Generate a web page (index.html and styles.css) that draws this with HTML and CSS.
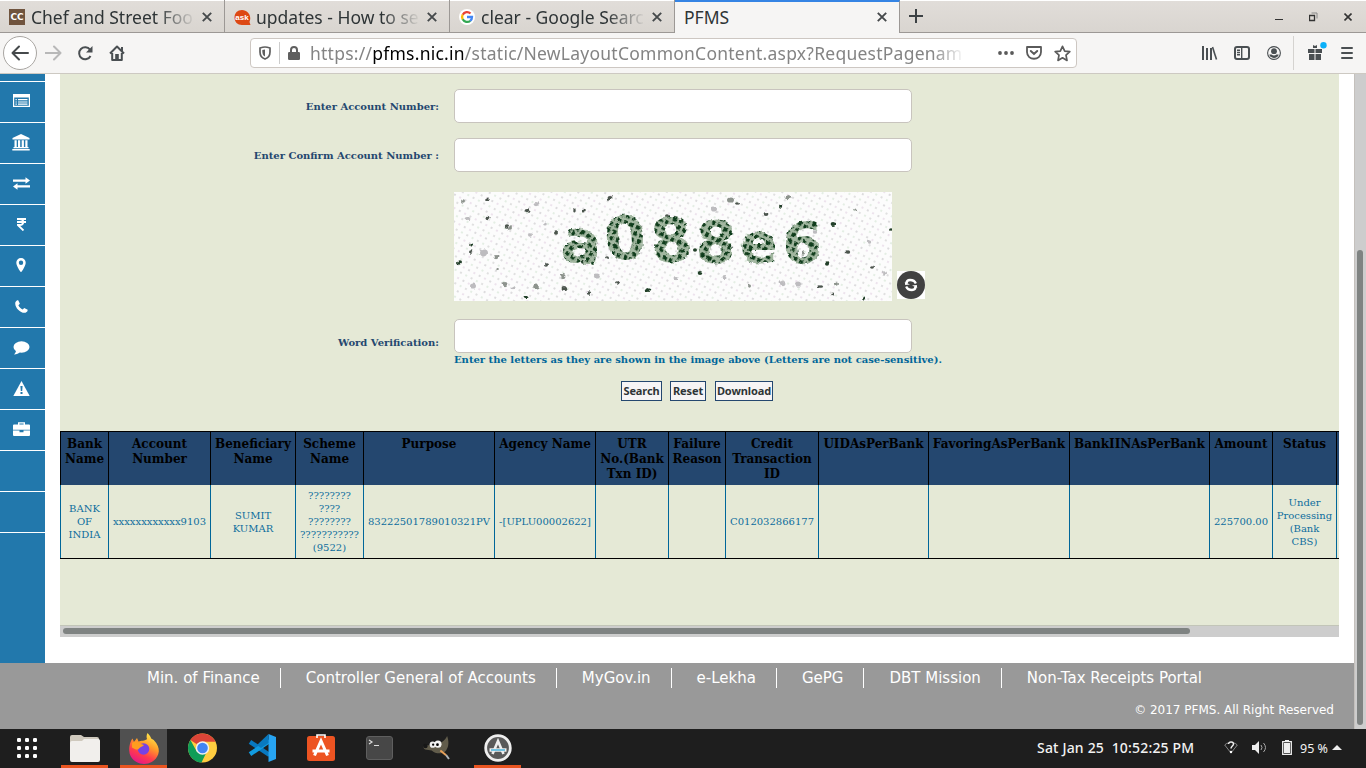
FILE: index.html
```html
<!DOCTYPE html>
<html lang="en">
<head>
<meta charset="utf-8">
<title>PFMS</title>
<link rel="stylesheet" href="styles.css">
</head>
<body>
<div class="screen">
  <header class="tabs">
    <div class="tab">
      <svg class="fav" width="16" height="16" viewBox="0 0 16 16"><rect width="16" height="16" fill="#70543e"/><text x="8" y="11" text-anchor="middle" class="cc">CC</text></svg>
      <span class="tab-title">Chef and Street Foo</span>
      <svg class="x" width="10" height="10" viewBox="0 0 10 10"><path d="M.8.8l8.4 8.4M9.2.8L.8 9.2"/></svg>
    </div>
    <div class="tab">
      <svg class="fav" width="17" height="17" viewBox="0 0 17 17"><path fill="#dd4814" d="M8 1C3.500 1 .5 4 .5 8.500S3.500 16 8 16h8.500l-1-3C18 7 14 1 8 1z"/><text x="8" y="11" text-anchor="middle" class="ask">ask</text></svg>
      <span class="tab-title second">updates - How to se</span>
      <svg class="x" width="10" height="10" viewBox="0 0 10 10"><path d="M.8.8l8.4 8.4M9.2.8L.8 9.2"/></svg>
    </div>
    <div class="tab">
      <svg class="fav" width="16" height="16" viewBox="0 0 16 16"><circle cx="8" cy="8" r="8" fill="#fff"/><g fill="none" stroke-width="2.300"><path stroke="#ea4335" d="M3.700 5.700A5 5 0 0 1 11.500 4.500"/><path stroke="#fbbc05" d="M3.700 5.600a5 5 0 0 0 0 4.800"/><path stroke="#34a853" d="M3.700 10.300a5 5 0 0 0 7.600 1.500"/><path stroke="#4285f4" d="M8 8h5a5 5 0 0 1-1.800 3.900"/></g></svg>
      <span class="tab-title">clear - Google Searc</span>
      <svg class="x" width="10" height="10" viewBox="0 0 10 10"><path d="M.8.8l8.4 8.4M9.2.8L.8 9.2"/></svg>
    </div>
    <div class="tab active">
      <span class="tab-title">PFMS</span>
      <svg class="x" width="10" height="10" viewBox="0 0 10 10"><path d="M.8.8l8.4 8.4M9.2.8L.8 9.2"/></svg>
    </div>
    <svg class="plus" width="14" height="14" viewBox="0 0 14 14"><path d="M7 0v14M0 7h14"/></svg>
    <div class="winctl">
      <svg width="8" height="10" viewBox="0 0 8 10"><path d="M0 7.500h8" stroke="#333" fill="none"/></svg>
      <svg width="9" height="10" viewBox="0 0 9 10"><g fill="none" stroke="#333"><path d="M.5 3.500h5v5h-5z" stroke-width="1.300"/><path d="M2.500 1h5.500v5.500" stroke="#888"/></g></svg>
      <svg width="8" height="8" viewBox="0 0 8 8"><path d="M.5.5l7 7M7.500.5l-7 7" stroke="#333" stroke-width="1.600"/></svg>
    </div>
  </header>

  <div class="toolbar">
    <div class="back"><svg width="18" height="16" viewBox="0 0 18 16"><path d="M17 8H2M8 1.500L1.500 8 8 14.500"/></svg></div>
    <svg class="fwd" width="17" height="16" viewBox="0 0 17 16"><path d="M0 8h15M9 1.500L15.500 8 9 14.500"/></svg>
    <svg class="reload" width="16" height="16" viewBox="0 0 16 16"><path fill="none" stroke="#4a4f52" stroke-width="2" d="M13 4.700A6 6 0 1 0 13.500 11"/><path fill="#4a4f52" d="M15.500 1v6.500H9z"/></svg>
    <svg class="home" width="16" height="16" viewBox="0 0 16 16"><path fill="none" stroke="#4a4f52" stroke-width="2" stroke-linejoin="round" d="M1 8.500L8 1.500l7 7M3.200 8v7h9.600V8"/><path fill="#4a4f52" d="M6.200 9h3.600v6H6.200zM12 2h2v4h-2z"/></svg>
    <div class="urlbar">
      <svg width="12" height="14" viewBox="0 0 12 14"><path fill="none" stroke="#5f5f5f" stroke-width="1.700" d="M6 1c2 0 3.500.5 5 1v4c0 4-2 6-5 7-3-1-5-3-5-7V2c1.500-.5 3-1 5-1z"/><path fill="#5f5f5f" d="M6 3.500v7C4 9.500 3.300 8 3.300 4z"/></svg>
      <i class="usep"></i>
      <svg class="lock" width="12" height="14" viewBox="0 0 12 14"><path fill="none" stroke="#5f5f5f" stroke-width="2" d="M3 7V4a3 3 0 0 1 6 0v3"/><rect y="6" width="12" height="8" rx="1.200" fill="#5f5f5f"/></svg>
      <span class="url">https://<b>pfms.nic.in</b>/static/NewLayoutCommonContent.aspx?RequestPagenam</span>
      <svg class="dots" width="16" height="4" viewBox="0 0 16 4"><g fill="#5a5a5a"><circle cx="2" cy="2" r="1.900"/><circle cx="8" cy="2" r="1.900"/><circle cx="14" cy="2" r="1.900"/></g></svg>
      <svg class="pocket" width="16" height="14" viewBox="0 0 16 14"><path fill="none" stroke="#5a5a5a" stroke-width="1.800" stroke-linejoin="round" d="M1 1h14v5c0 9-14 9-14 0z"/><path fill="none" stroke="#5a5a5a" stroke-width="2" stroke-linecap="round" d="M4.800 5L8 8l3.200-3"/></svg>
      <svg class="star" width="17" height="17" viewBox="0 0 17 17"><path fill="none" stroke="#5a5a5a" stroke-width="1.700" stroke-linejoin="round" d="M8.500 1.300l2.200 4.800 5.100.6-3.800 3.500 1 5.200-4.500-2.600L4 15.400l1-5.200-3.800-3.500 5.100-.6z"/></svg>
    </div>
    <div class="tools">
      <svg width="16" height="14" viewBox="0 0 16 14"><path fill="none" stroke="#4a4f52" stroke-width="2" d="M1 0v14M5 2v12M9 2v12"/><path stroke="#4a4f52" stroke-width="1.600" d="M10.500 1l4 12.500"/></svg>
      <svg width="16" height="14" viewBox="0 0 16 14"><rect x="1" y="1" width="14" height="12" rx="2" fill="none" stroke="#4a4f52" stroke-width="2"/><path stroke="#4a4f52" stroke-width="1.400" d="M7.700 1v12M3 4.200h3M3 6.500h3M3 8.800h3"/></svg>
      <svg class="account" width="14" height="14" viewBox="0 0 14 14"><circle cx="7" cy="7" r="6.400" fill="none" stroke="#4a4f52" stroke-width="1.100"/><circle cx="7" cy="5.200" r="2.900" fill="#4a4f52"/><path fill="#4a4f52" d="M2.300 8.500h2.200c1.500 1.300 3.500 1.300 5 0h2.200c-.8 4.500-8.600 4.500-9.400 0z"/></svg>
      <i class="tsep"></i>
      <svg class="gift" width="19" height="18" viewBox="0 0 19 18"><path fill="#4a4f52" d="M0 7h6.500v4H0zM7.500 7H14v4H7.500zM1 12h5.500v6H1zM7.500 12H13v6H7.500zM5 3l2 1 2-1v3H5z"/><circle cx="15.500" cy="3.200" r="3.200" fill="#0ab0f9"/></svg>
      <svg class="menu" width="12" height="12" viewBox="0 0 12 12"><path stroke="#4a4f52" stroke-width="2" stroke-linecap="round" d="M1 1h10M1 6h10M1 11h10"/></svg>
    </div>
  </div>

  <div class="viewport">
    <div class="page">
      <div class="body">
        <nav class="side">
          <a class="first"></a>
          <a><svg width="17" height="14" viewBox="0 0 17 14"><path fill="none" stroke="#fff" stroke-width="1.200" d="M.6 1.600h15.800v10.800H.6z"/><path fill="#fff" d="M0 0h17v3.500H0z"/><path stroke="#fff" stroke-width="1.200" d="M2.500 5.700h1.300M5 5.700h9.500M2.500 8h1.300M5 8h9.500M2.500 10.200h1.300M5 10.200h9.500"/></svg></a>
          <a><svg width="18" height="17" viewBox="0 0 18 17"><path fill="#fff" d="M9 0l8.500 4v1.500H.5V4zM2.500 6.300h2.200v6.700H2.500zM6 6.300h2.200V13H6zM9.700 6.300h2.200V13H9.700zM13.300 6.300h2.200V13h-2.200zM1.500 13h15v1.300h-15zM.3 15h17.400v1.600H.3z"/></svg></a>
          <a><svg width="17" height="13" viewBox="0 0 17 13"><path fill="#fff" d="M0 2.500h12.500V.3L17 3.600l-4.500 3.200V4.700H0zM17 8.300H4.500V6.200L0 9.400l4.500 3.300v-2.200H17z"/></svg></a>
          <a><svg width="9" height="13" viewBox="0 0 9 13"><path fill="none" stroke="#fff" stroke-width="1.800" d="M0 1h9M0 4h9M0 1h2.500c5 0 5 6 0 6H.8l5.700 5.500"/></svg></a>
          <a><svg width="10" height="14" viewBox="0 0 10 14"><path fill="#fff" fill-rule="evenodd" d="M5 0a4.700 4.700 0 0 1 4.700 5C9.700 7 7.500 11 5.700 13.600a.8.8 0 0 1-1.400 0C2.500 11 .3 7 .3 5A4.700 4.700 0 0 1 5 0zm0 2.500a2.200 2.200 0 1 0 0 4.400 2.200 2.200 0 0 0 0-4.400z"/></svg></a>
          <a><svg width="13" height="13" viewBox="0 0 13 13"><path fill="#fff" d="M.3 2.500C1 .8 2 .3 3.200.3l1.700 3.500-1.500 1.500c1 2 2.300 3.300 4.300 4.300l1.500-1.500 3.500 1.700c0 1.200-.5 2.200-2.200 2.900C5.500 13.500-.5 7.500.3 2.500z"/></svg></a>
          <a class="low"><svg width="17" height="14" viewBox="0 0 17 14"><ellipse cx="8.500" cy="6" rx="8" ry="5.800" fill="#fff"/><path fill="#fff" d="M3 9c0 2-.7 3.300-2 4.500 3 0 4.700-1 6-2.500z"/></svg></a>
          <a><svg width="17" height="15" viewBox="0 0 17 15"><path fill="#fff" d="M8.500 0l8.200 15H.3z"/><path fill="#2278ac" d="M7.400 5h2.200l-.4 5H7.800zM7.500 11h2v2h-2z"/></svg></a>
          <a><svg width="17" height="14" viewBox="0 0 17 14"><path fill="none" stroke="#fff" stroke-width="1.400" d="M5.700 3V.9h5.600V3"/><path fill="#fff" d="M1 2.600h15a1 1 0 0 1 1 1v4.200H0V3.600a1 1 0 0 1 1-1zM0 8.600h6.500v1.700h4V8.600H17V13a1 1 0 0 1-1 1H1a1 1 0 0 1-1-1z"/></svg></a>
          <a></a><a></a>
        </nav>
        <main class="panel">
          <div class="panel-body">
            <form class="form">
              <label>Enter Account Number:</label><div><input type="text"></div>
              <label>Enter Confirm Account Number :</label><div><input type="text"></div>
              <span></span>
              <div class="captcha">
                <svg width="438" height="109" viewBox="0 0 438 109">
                  <defs>
                    <pattern id="grain" width="12" height="12" patternUnits="userSpaceOnUse" patternTransform="rotate(28)"><rect width="12" height="12" fill="#fcfcfc"/><circle cx="2" cy="2" r=".8" fill="#b6b5b8"/><circle cx="8" cy="2" r=".8" fill="#dac5da"/><circle cx="2" cy="8" r=".8" fill="#c7dec7"/><circle cx="8" cy="8" r=".8" fill="#bcbcbc"/></pattern>
                    <pattern id="weave" width="6.600" height="6.600" patternUnits="userSpaceOnUse" patternTransform="rotate(28)"><rect width="6.600" height="6.600" fill="#a3b8a1"/><rect x="1" y="1" width="4" height="4" fill="#113d1c"/></pattern>
                    <filter id="soft" x="-5%" y="-10%" width="110%" height="120%"><feTurbulence type="fractalNoise" baseFrequency=".18" numOctaves="2" seed="4" result="n"/><feDisplacementMap in="SourceGraphic" in2="n" scale="4" xChannelSelector="R" yChannelSelector="G"/><feGaussianBlur stdDeviation=".7"/></filter>
                  </defs>
                  <rect width="438" height="109" fill="url(#grain)"/>
                  <g id="specks" filter="url(#soft)"></g>
                  <g class="word" filter="url(#soft)" fill="url(#weave)">
                    <text transform="translate(105 68) rotate(8)" font-size="60">a</text>
                    <text transform="translate(152 69) rotate(-5)" font-size="60">0</text>
                    <text transform="translate(198 71) rotate(-4)" font-size="60">8</text>
                    <text transform="translate(241 70) rotate(2)" font-size="58">8</text>
                    <text transform="translate(286 70)" font-size="55">e</text>
                    <text transform="translate(328 71) rotate(1)" font-size="57">6</text>
                  </g>
                </svg>
                <svg class="refresh" width="28" height="28" viewBox="0 0 28 28"><rect width="28" height="28" fill="#fff"/><circle cx="14" cy="14" r="14" fill="#414141"/><g fill="none" stroke="#fff" stroke-width="2.300"><path d="M9.500 12.500c0-2 1.300-3.500 3.500-3.500 2.800 0 5 1.200 5.800 3.500"/><path d="M18.500 15.500c0 2-1.300 3.500-3.500 3.500-2.800 0-5-1.200-5.800-3.500"/></g><path fill="#fff" d="M7.800 11l.4 3 4.800-.6zM20.200 17l-.4-3-4.800.6z"/></svg>
              </div>
              <label class="wv">Word Verification:</label>
              <div class="verify"><input type="text"><p class="hint">Enter the letters as they are shown in the image above (Letters are not case-sensitive).</p></div>
            </form>
            <div class="buttons"><button class="b1">Search</button><button class="b2">Reset</button><button class="b3">Download</button></div>
            <table class="grid">
              <colgroup><col style="width:48px"><col style="width:102px"><col style="width:85px"><col style="width:68px"><col style="width:131px"><col style="width:101px"><col style="width:73px"><col style="width:57px"><col style="width:93px"><col style="width:110px"><col style="width:141px"><col style="width:140px"><col style="width:63px"><col style="width:64px"><col style="width:100px"></colgroup>
              <thead><tr><th>Bank<br>Name</th><th>Account<br>Number</th><th>Beneficiary<br>Name</th><th>Scheme<br>Name</th><th>Purpose</th><th>Agency Name</th><th>UTR<br>No.(Bank<br>Txn ID)</th><th>Failure<br>Reason</th><th>Credit<br>Transaction<br>ID</th><th>UIDAsPerBank</th><th>FavoringAsPerBank</th><th>BankIINAsPerBank</th><th>Amount</th><th>Status</th><th></th></tr></thead>
              <tbody><tr><td>BANK<br>OF<br>INDIA</td><td>xxxxxxxxxxxx9103</td><td>SUMIT<br>KUMAR</td><td>????????<br>????<br>????????<br>???????????<br>(9522)</td><td>83222501789010321PV</td><td>-[UPLU00002622]</td><td></td><td></td><td>C012032866177</td><td></td><td></td><td></td><td>225700.00</td><td>Under<br>Processing<br>(Bank<br>CBS)</td><td></td></tr></tbody>
            </table>
          </div>
          <div class="hscroll"><i></i></div>
        </main>
      </div>
      <footer class="foot">
        <ul><li>Min. of Finance</li><li>Controller General of Accounts</li><li>MyGov.in</li><li>e-Lekha</li><li>GePG</li><li>DBT Mission</li><li>Non-Tax Receipts Portal</li></ul>
        <p>© 2017 PFMS. All Right Reserved</p>
      </footer>
    </div>
    <div class="vscroll"><i></i></div>
  </div>

  <div class="dock">
    <div class="app apps"><svg width="20" height="20" viewBox="0 0 20 20"><g fill="#fff"><rect width="4" height="4" rx="1.300"/><rect x="8" width="4" height="4" rx="1.300"/><rect x="16" width="4" height="4" rx="1.300"/><rect y="8" width="4" height="4" rx="1.300"/><rect x="8" y="8" width="4" height="4" rx="1.300"/><rect x="16" y="8" width="4" height="4" rx="1.300"/><rect y="16" width="4" height="4" rx="1.300"/><rect x="8" y="16" width="4" height="4" rx="1.300"/><rect x="16" y="16" width="4" height="4" rx="1.300"/></g></svg></div>
    <div class="app run"><svg width="30" height="28" viewBox="0 0 30 28"><path fill="#cfc9bd" d="M0 3a2 2 0 0 1 2-2h9l3 2h13a2 2 0 0 1 2 2v12H0z"/><path fill="#f1efec" d="M0 9a2 2 0 0 1 2-2h10l2-2h13.500A2 2 0 0 1 30 7v19a2 2 0 0 1-2 2H2a2 2 0 0 1-2-2z"/></svg></div>
    <div class="app run focus"><svg width="30" height="31" viewBox="0 0 30 31"><defs><linearGradient id="fx" x1=".8" y1="0" x2=".3" y2="1"><stop offset="0" stop-color="#fff44f"/><stop offset=".4" stop-color="#ff9a2a"/><stop offset=".7" stop-color="#ff3b4c"/><stop offset="1" stop-color="#e5158b"/></linearGradient></defs><path fill="url(#fx)" d="M18.500 0c2 2 3 3.500 3.700 5.500l2.500 1.500c4 4 5.300 8 5.100 11.500C29 26 22.500 31 15 31S.5 25.500.2 17.500C0 13 1.500 8 3.500 5.500L5 9l3-4 1.500 3.500C12 7.500 16 8 18 6c-.7-2-.5-4 .5-6z"/><circle cx="14.500" cy="16" r="5.800" fill="#7542e5"/><path fill="#ff9d1f" d="M3 10c4-3 7-1 9 1l3 1c-1 2-4 1.500-5 3.500-1 2-4 1-7-1z"/></svg></div>
    <div class="app"><svg width="29" height="30" viewBox="0 0 30 30"><circle cx="15" cy="15" r="15" fill="#ffcd40"/><path fill="#db4437" d="M15 15L2.500 6.700C7-.6 17-2 24 3c2 1.500 3.500 3.500 4.500 5.500H15z"/><path fill="#0f9d58" d="M2.500 6.700L9 18.500l10.500 0L14 30C3 29.500-4 17 2.500 6.700z"/><circle cx="15" cy="15" r="7" fill="#f1f1f1"/><circle cx="15" cy="15" r="5.500" fill="#4285f4"/></svg></div>
    <div class="app"><svg width="28" height="28" viewBox="0 0 28 28"><path fill="none" stroke="#0878c0" stroke-width="4.500" d="M21.500 21L2 7.800"/><path fill="none" stroke="#119be0" stroke-width="4.500" d="M21.500 7L2 20.200"/><path fill="#27a4f2" d="M20.500 0L28 3v22l-7.500 3z"/><path fill="#0879bf" d="M20.500 0v9L13 14l-4-3z"/></svg></div>
    <div class="app"><svg width="28" height="28" viewBox="0 0 28 28"><rect y="2" width="28" height="25" rx="2.500" fill="#ed5422"/><path fill="none" stroke="#fff" stroke-width="1.600" d="M10 4V1h8v3"/><path fill="none" stroke="#fff" stroke-width="3" d="M7.500 21.500L14 7l6.500 14.500M5.500 17h17"/></svg></div>
    <div class="app"><svg width="27" height="24" viewBox="0 0 27 24"><rect x=".5" y=".5" width="26" height="23" rx="2.500" fill="#474747" stroke="#5f5f5f"/><path fill="none" stroke="#ddd" stroke-width="1.200" d="M3 4l3 2-3 2M8 9.500h5"/></svg></div>
    <div class="app"><svg class="gimp" width="28" height="24" viewBox="0 0 29 25"><path fill="#615c4b" d="M25 0c2 5 2 11-1 15-3 4-11 4-15 0l-7-1c-2-1-2-4 0-5l5 1c3-2 6-4 10-3 3 0 6-3 8-7z"/><circle cx="10" cy="9" r="3.200" fill="#eee"/><circle cx="15.500" cy="8.500" r="3.700" fill="#f5f5f5"/><circle cx="10.500" cy="9" r="1.200"/><circle cx="15" cy="9" r="1.400"/><circle cx="2.500" cy="10.500" r="2.300" fill="#171717"/><path stroke="#e7a05a" stroke-width="2" d="M18 15l6 5"/><path stroke="#b0b5bb" stroke-width="2" d="M24 20l3 4"/></svg></div>
    <div class="app run"><svg width="28" height="28" viewBox="0 0 28 28"><circle cx="14" cy="14" r="12.300" fill="#595959" stroke="#eee" stroke-width="2.800"/><path fill="none" stroke="#eee" stroke-width="2.600" d="M8.500 20L14 7l5.500 13"/><path stroke="#eee" stroke-width="3.500" d="M5.500 16h17"/><path stroke="#20a4d8" stroke-width="1.200" d="M7 16h14"/></svg></div>
    <div class="clock">Sat Jan 25&nbsp; 10:52:25 PM</div>
    <svg class="wifi" width="14" height="13" viewBox="0 0 14 13"><path fill="none" stroke="#888" d="M4 2Q2 2.500.7 4L7 12l6.300-8Q12 2.500 10 2"/><path fill="none" stroke="#eee" stroke-width="1.500" d="M4.500 3c.5-3 5-2.500 5 0 0 2-2.500 2-2.500 4.500"/><circle cx="7" cy="11" r="1.200" fill="#fff"/></svg>
    <svg class="vol" width="15" height="13" viewBox="0 0 15 13"><path fill="#eee" d="M0 4h3l4-4v13L3 9H0z"/><path fill="none" stroke="#aaa" d="M9 4q2 2.500 0 5M11.500 2q4 4.500 0 9"/></svg>
    <svg class="bat" width="10" height="15" viewBox="0 0 10 15"><path fill="none" stroke="#eee" stroke-width="1.300" d="M.7 1.700h8.600v12.600H.7zM3 .7h4"/><path fill="#eee" d="M2 3h6v10H2z"/></svg>
    <span class="pct">95 %</span>
    <svg class="up" width="10" height="5" viewBox="0 0 10 5"><path fill="#eee" d="M5 0l5 5H0z"/></svg>
  </div>
</div>
<script src="captcha.js"></script>
</body>
</html>
```
FILE: styles.css
```css
* { box-sizing: border-box; }
body { margin: 0; font-family: "DejaVu Serif", serif; }
.screen { width: 1366px; height: 768px; display: flex; flex-direction: column; overflow: hidden; background: #fff; }
svg { display: block; flex: none; }

.tabs { height: 33px; display: flex; background: linear-gradient(#fff 1px, #e1ddd9 1px, #d9d5d0); border-bottom: 1px solid #9c9895; font-family: "Noto Sans", sans-serif; }
.tab { width: 225px; height: 32px; padding: 2px 12px 0 9px; display: flex; align-items: center; border-right: 1px solid #9c9895; }
.tab.active { height: 33px; background: #f6f5f4; border-top: 2px solid #3584e4; padding: 0 12px 2px 9px; }
.fav { margin-right: 6px; }
.tab-title { flex: 1; min-width: 0; overflow: hidden; white-space: nowrap; font-size: 17.5px; line-height: 26px; color: #2e3436; margin-right: 3px; -webkit-mask-image: linear-gradient(90deg, #000 75%, transparent 98%); mask-image: linear-gradient(90deg, #000 75%, transparent 98%); }
.tab-title.second { margin-left: -1px; }
.active .tab-title { -webkit-mask-image: none; mask-image: none; }
.x path { fill: none; stroke: #45494b; stroke-width: 1.9; }
.cc { font: bold 9px "DejaVu Sans", sans-serif; fill: #fff; }
.ask { font: bold 8px "Liberation Sans", sans-serif; fill: #fff; }
.plus { margin: 9px 0 0 9px; }
.plus path { stroke: #3c4144; stroke-width: 2; }
.winctl { margin-left: auto; margin-right: 14px; padding-top: 2px; display: flex; gap: 26px; align-items: center; }

.toolbar { height: 41px; display: flex; align-items: center; background: #f6f5f4; border-bottom: 1px solid #cdc9c2; padding-left: 3px; }
.back { width: 34px; height: 34px; border: 1px solid #a9a6a2; border-radius: 50%; background: #fff; display: flex; align-items: center; justify-content: center; }
.back path, .fwd path { fill: none; stroke: #45494b; stroke-width: 2; stroke-linecap: round; stroke-linejoin: round; }
.fwd { margin-left: 8px; }
.fwd path { stroke: #b8b8b8; }
.reload { margin-left: 15px; }
.home { margin-left: 16px; }
.urlbar { margin-left: 125px; width: 827px; height: 30px; border: 1px solid #cdc7c2; border-radius: 4px; background: #fff; display: flex; align-items: center; padding-left: 8px; }
.usep { width: 1px; height: 22px; background: #ccc; margin: 0 8px; }
.lock { margin-right: 10px; }
.url { width: 655px; overflow: hidden; white-space: nowrap; font: 17.5px/26px "Noto Sans", sans-serif; letter-spacing: .24px; color: #848484; -webkit-mask-image: linear-gradient(90deg, #000 95%, transparent); mask-image: linear-gradient(90deg, #000 95%, transparent); }
.url b { font-weight: 400; color: #000; }
.dots { margin-left: 33px; }
.pocket { margin-left: 12px; }
.star { margin-left: 12px; }
.tools { margin-left: 125px; display: flex; align-items: center; }
.tools > svg { margin-right: 16px; }
.tools > .account { margin-left: 1px; }
.tsep { width: 1px; height: 34px; background: #d5d3d0; margin: 0 14px 0 -4px; }
.tools > .gift { margin: -4px 14px 0 0; }
.tools > .menu { margin: 0; }

.viewport { height: 655px; display: flex; }
.page { width: 1354px; display: flex; flex-direction: column; }
.body { height: 589px; display: flex; }
.side { width: 45px; background: #2278ac; display: flex; flex-direction: column; }
.side a { height: 41px; border-bottom: 1px solid #fff; display: flex; align-items: center; justify-content: center; padding: 0 3px 2px 0; }
.side a.first { height: 8px; }
.side a.low { padding-bottom: 0; }
.panel { margin-left: 15px; width: 1279px; height: 563px; background: #e5e9d6; display: flex; flex-direction: column; }
.panel-body { height: 551px; overflow: hidden; }
.form { display: grid; grid-template-columns: 379px 520px; column-gap: 15px; grid-template-rows: 49px 54px 127px 48px; padding-top: 15px; font-size: 10px; font-weight: bold; color: #24476f; }
.form label { text-align: right; padding-top: 11px; line-height: 13px; }
.form label.wv { padding-top: 17px; }
.form input { display: block; width: 458px; height: 34px; border: 1px solid #c8c4be; border-radius: 5px; background: #fff; }
.captcha { display: flex; }
.captcha .refresh { margin: 79px 0 0 5px; }
.word { font-family: "DejaVu Sans", sans-serif; font-weight: bold; }
.hint { margin: 0; line-height: 13px; color: #006699; white-space: nowrap; }
.buttons { display: flex; padding: 14px 0 0 561px; height: 64px; align-items: flex-start; }
.buttons button { height: 20px; padding: 0; border: 1px solid #24476f; background: #f6f4f5; color: #2e3436; font: bold 11px/16px "Noto Sans", sans-serif; letter-spacing: -.1px; }
.b1 { width: 41px; }
.b2 { width: 36px; margin-left: 8px; }
.b3 { width: 58px; margin-left: 9px; }
.grid { width: 1376px; table-layout: fixed; border-collapse: separate; border-spacing: 0; border-top: 1px solid #000; border-bottom: 1px solid #000; text-align: center; }
.grid th { height: 53px; padding: 5px 0 0; vertical-align: top; background: #24476f; color: #000; font-size: 12px; line-height: 15px; border-left: 1px solid #000; white-space: nowrap; }
.grid td { height: 73px; padding: 0; vertical-align: middle; color: #0d6d9d; font-size: 10px; line-height: 13px; border-left: 1px solid #006699; white-space: nowrap; }
.hscroll { height: 12px; background: #cdcdcd; border-top: 1px solid #c2c5b8; padding: 2px 3px; }
.hscroll i { display: block; width: 1127px; height: 6px; border-radius: 3px; background: #7f8382; }
.foot { height: 66px; background: #999; color: #fff; font-family: "DejaVu Sans", sans-serif; }
.foot ul { list-style: none; margin: 0; padding: 5px 0 0 147px; display: flex; }
.foot li { height: 20px; line-height: 21px; font-size: 15px; white-space: nowrap; padding-right: 20px; margin-right: 25px; border-right: 1px solid #fff; }
.foot li:last-child { border: 0; }
.foot p { margin: 15px 20px 0 0; text-align: right; font-size: 12px; line-height: 15px; }
.vscroll { width: 12px; background: #cdcdcd; border-left: 1px solid #c4c0bc; padding: 176px 0 0 2px; }
.vscroll i { display: block; width: 6px; height: 475px; border-radius: 3px; background: #7f8382; }

.dock { height: 39px; background: #1e1e1e; display: flex; align-items: center; color: #f2f2f2; font-family: "Noto Sans", sans-serif; }
.app { width: 47px; height: 39px; margin-right: 12px; display: flex; align-items: center; justify-content: center; border-bottom: 3px solid transparent; padding: 2px 0 0; }
.app.apps { width: 49px; margin-left: 3px; margin-right: 9px; padding-right: 1px; }
.app.run { border-bottom-color: #e95420; }
.app.focus { background: #505050; }
.gimp { margin-right: 4px; }
.clock { margin-left: 504px; width: 187px; padding-bottom: 2px; white-space: nowrap; font-size: 14px; font-weight: 500; letter-spacing: .18px; }
.pct { font-size: 12.5px; margin-left: 8px; width: 32px; white-space: nowrap; }
.vol { margin-left: 14px; }
.bat { margin-left: 15px; }
.wifi, .vol, .bat, .up { margin-bottom: 2px; }
```
FILE: captcha.js
```js
// Scatter soft specks over the verification image: x, y, radius, shade.
const specks = [
  [34,7,1.8,2],[9,9,2,1],[73,19,2.5,2],[82,12,2.5,0],[156,6,2.5,2],[34,26,2.6,2],[53,34,2.2,2],[121,18,1.8,2],[130,19,1.8,2],
  [18,53,1.8,3],[17,60,2,2],[30,61,4,0],[42,65,2.5,1],[5,71,2,3],[93,73,2,2],[43,77,1.8,1],[129,70,2,3],[153,66,2,2],
  [19,94,3,0],[51,92,2.5,1],[59,96,2.5,0],[82,94,2.8,1],[110,96,2.5,2],[135,101,2.2,2],[72,105,2.5,3],[163,91,2,2],[194,98,2.3,3],
  [109,84,2.5,1],[143,84,3,0],[246,81,2.3,3],[271,85,2.5,0],[222,86,2.5,0],[277,8,3,1],[283,12,2,2],[312,22,2.4,2],[327,14,2,3],
  [334,5,2.5,1],[260,17,3,0],[379,32,2.4,3],[394,60,2.2,2],[373,72,2,3],[418,75,2,2],[296,94,2,1],[328,91,2.5,0],[344,92,3,0],
  [366,95,2.2,2],[379,102,1.8,2],[410,106,1.8,3],[437,37,2,3],[382,92,2,1],[430,81,2,0],[224,49,2,1],[102,41,2,2],[91,32,1.8,0],
  [76,43,2,0],[56,36,2,1],[401,18,1.8,1],[415,50,2.2,0],[349,61,2,1],[241,58,2,3],[213,25,2,2],[361,40,2.2,0],[14,27,2.4,0]
];
const shades = ["#bdbcbf", "#8d938d", "#4c554e", "#244129"];
const layer = document.getElementById("specks");
for (const [x, y, r, s] of specks) {
  const e = document.createElementNS("http://www.w3.org/2000/svg", "ellipse");
  e.setAttribute("cx", x);
  e.setAttribute("cy", y);
  e.setAttribute("rx", r);
  e.setAttribute("ry", r * 0.85);
  e.setAttribute("fill", shades[s]);
  layer.appendChild(e);
}
```
